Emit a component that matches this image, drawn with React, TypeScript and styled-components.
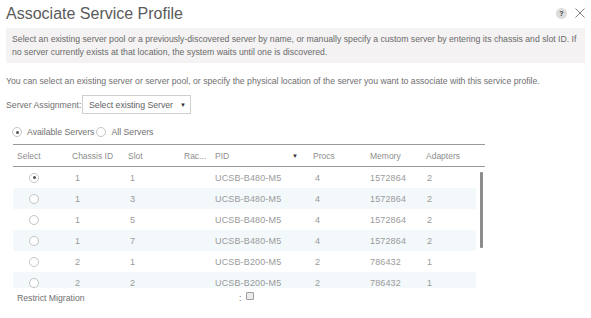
import React from 'react';
import styled, { createGlobalStyle } from 'styled-components';

const GlobalStyle = createGlobalStyle`
  html, body {
    margin: 0;
    padding: 0;
    background: #ffffff;
  }
  body {
    font-family: 'Liberation Sans', Arial, sans-serif;
    font-size: 8.7px;
    color: #6f6f6f;
  }
`;

// Styles
const Dialog = styled.div`
  width: 591px;
  height: 318px;
  box-sizing: border-box;
  padding: 0 6px;
  overflow: hidden;
`;

const TitleBar = styled.div`
  height: 28px;
  display: flex;
  align-items: center;
`;

const Title = styled.h1`
  margin: 0;
  font-size: 16px;
  font-weight: normal;
  color: #5a5a5a;
  flex-grow: 1;
`;

const HelpIcon = styled.span`
  width: 11px;
  height: 11px;
  border-radius: 50%;
  background: #dcdcdc;
  color: #3c3c3c;
  font-size: 7px;
  font-weight: bold;
  display: flex;
  align-items: center;
  justify-content: center;
  margin-right: 8px;
  margin-top: -2px;
`;

const CloseIcon = styled.svg`
  width: 10px;
  height: 10px;
  margin-right: 0;
  margin-top: -2px;
`;

const InfoBox = styled.div`
  background: #f4f2f2;
  padding: 5px 6px 4px;
  line-height: 13px;
  color: #6a6a6a;
`;

const Description = styled.p`
  margin: 12px 0 0;
  line-height: 12px;
`;

const AssignmentRow = styled.div`
  display: flex;
  align-items: center;
  margin-top: 8px;
`;

const FieldLabel = styled.span`
  width: 76px;
  white-space: nowrap;
`;

const SelectBox = styled.div`
  width: 101px;
  height: 17px;
  border: 1px solid #cfcfcf;
  display: flex;
  align-items: center;
  padding-left: 6px;
  box-sizing: content-box;
  color: #5f5f5f;
`;

const Caret = styled.span`
  font-size: 6px;
  color: #333;
  margin-left: 7px;
`;

const FilterRow = styled.div`
  display: flex;
  align-items: center;
  height: 12px;
  margin-top: 12px;
  padding-left: 6px;
`;

const Radio = styled.span<{ $checked?: boolean }>`
  width: 8px;
  height: 8px;
  border: 1px solid #c4c4c4;
  border-radius: 50%;
  background: #fff;
  display: inline-flex;
  align-items: center;
  justify-content: center;
  flex-shrink: 0;
  &::after {
    content: '';
    width: 3px;
    height: 3px;
    border-radius: 50%;
    background: ${(p) => (p.$checked ? '#555' : 'transparent')};
  }
`;

const RadioLabel = styled.span`
  margin: 0 2px 0 5px;
  color: #707070;
`;

const Table = styled.div`
  width: 472px;
  margin: 6px 0 0 7px;
  border-top: 1px solid #9a9a9a;
`;

const columns = '55px 56px 56px 31px 98px 57px 56px 1fr';

const HeaderRow = styled.div`
  display: grid;
  grid-template-columns: ${columns};
  height: 21px;
  align-items: center;
  border-bottom: 1px solid #9a9a9a;
  color: #8e8e8e;
  font-size: 8.5px;
`;

const HeaderCell = styled.div`
  padding-left: 4px;
  display: flex;
  align-items: center;
`;

const SortArrow = styled.span`
  margin-left: auto;
  margin-right: 11px;
  font-size: 6px;
  color: #333;
`;

const Body = styled.div`
  position: relative;
  height: 121px;
  overflow: hidden;
`;

const ScrollThumb = styled.div`
  position: absolute;
  top: 5px;
  right: 2px;
  width: 3px;
  height: 76px;
  background: #8c8c8c;
  border-radius: 1px;
`;

const Row = styled.div<{ $alt: boolean }>`
  display: grid;
  grid-template-columns: ${columns};
  width: 463px;
  height: 21px;
  align-items: center;
  background: ${(p) => (p.$alt ? '#f3f8fb' : '#ffffff')};
  color: #9a9a9a;
  font-size: 9px;
  letter-spacing: 0.15px;
`;

const Cell = styled.div<{ $indent?: number }>`
  padding-left: ${(p) => p.$indent ?? 4}px;
`;

const RadioCell = styled.div`
  display: flex;
  padding-left: 16px;
`;

const RestrictRow = styled.div`
  display: flex;
  align-items: center;
  height: 19px;
  padding-left: 11px;
`;

const RestrictLabel = styled.span`
  width: 222px;
`;

const Checkbox = styled.span`
  width: 6px;
  height: 6px;
  border: 1px solid #9d9d9d;
  border-radius: 1px;
  background: #ececec;
  margin: -3px 0 0 5px;
`;

const servers = [
  { chassis: '1', slot: '1', pid: 'UCSB-B480-M5', procs: '4', memory: '1572864', adapters: '2' },
  { chassis: '1', slot: '3', pid: 'UCSB-B480-M5', procs: '4', memory: '1572864', adapters: '2' },
  { chassis: '1', slot: '5', pid: 'UCSB-B480-M5', procs: '4', memory: '1572864', adapters: '2' },
  { chassis: '1', slot: '7', pid: 'UCSB-B480-M5', procs: '4', memory: '1572864', adapters: '2' },
  { chassis: '2', slot: '1', pid: 'UCSB-B200-M5', procs: '2', memory: '786432', adapters: '1' },
  { chassis: '2', slot: '2', pid: 'UCSB-B200-M5', procs: '2', memory: '786432', adapters: '1' },
];

const App: React.FC = () => {
  return (
    <>
      <GlobalStyle />
      <Dialog>
        <TitleBar>
          <Title>Associate Service Profile</Title>
          <HelpIcon>?</HelpIcon>
          <CloseIcon viewBox="0 0 10 10">
            <path d="M0.5 0.5 L9.5 9.5 M9.5 0.5 L0.5 9.5" stroke="#707070" strokeWidth="0.9" fill="none" />
          </CloseIcon>
        </TitleBar>

        <InfoBox>
          Select an existing server pool or a previously-discovered server by name, or manually specify a
          custom server by entering its chassis and slot ID. If no server currently exists at that location,
          the system waits until one is discovered.
        </InfoBox>

        <Description>
          You can select an existing server or server pool, or specify the physical location of the server you
          want to associate with this service profile.
        </Description>

        <AssignmentRow>
          <FieldLabel>Server Assignment:</FieldLabel>
          <SelectBox>
            Select existing Server
            <Caret>▼</Caret>
          </SelectBox>
        </AssignmentRow>

        <FilterRow>
          <Radio $checked />
          <RadioLabel>Available Servers</RadioLabel>
          <Radio />
          <RadioLabel>All Servers</RadioLabel>
        </FilterRow>

        <Table>
          <HeaderRow>
            <HeaderCell>Select</HeaderCell>
            <HeaderCell>Chassis ID</HeaderCell>
            <HeaderCell>Slot</HeaderCell>
            <HeaderCell>Rac...</HeaderCell>
            <HeaderCell>
              PID
              <SortArrow>▼</SortArrow>
            </HeaderCell>
            <HeaderCell>Procs</HeaderCell>
            <HeaderCell>Memory</HeaderCell>
            <HeaderCell>Adapters</HeaderCell>
          </HeaderRow>
          <Body>
            {servers.map((s, i) => (
              <Row key={i} $alt={i % 2 === 1}>
                <RadioCell>
                  <Radio $checked={i === 0} />
                </RadioCell>
                <Cell $indent={7}>{s.chassis}</Cell>
                <Cell $indent={6}>{s.slot}</Cell>
                <Cell />
                <Cell>{s.pid}</Cell>
                <Cell $indent={6}>{s.procs}</Cell>
                <Cell>{s.memory}</Cell>
                <Cell $indent={5}>{s.adapters}</Cell>
              </Row>
            ))}
            <ScrollThumb />
          </Body>
        </Table>

        <RestrictRow>
          <RestrictLabel>Restrict Migration</RestrictLabel>
          :
          <Checkbox />
        </RestrictRow>
      </Dialog>
    </>
  );
};

export default App;
